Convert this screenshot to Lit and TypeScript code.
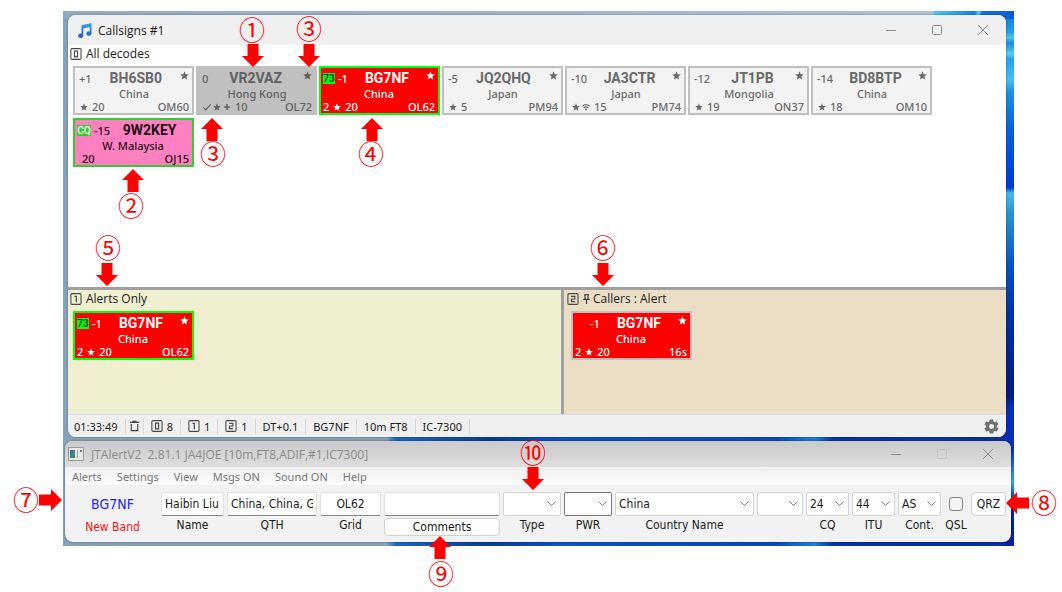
import { LitElement, html, css, svg, nothing } from "lit";
import { customElement, property } from "lit/decorators.js";

type Tone = "plain" | "worked" | "alert" | "wanted" | "caller";

interface Decode {
  tone: Tone;
  badge?: string;
  blankBadge?: boolean;
  snr: string;
  call: string;
  country: string;
  topStar: boolean;
  count?: string;
  marks: string[];
  bearing: string;
  grid: string;
}

const alertDecode: Decode = {
  tone: "alert", badge: "73", snr: "-1", call: "BG7NF", country: "China",
  topStar: true, count: "2", marks: ["star"], bearing: "20", grid: "OL62",
};

const allDecodes: Decode[] = [
  { tone: "plain", snr: "+1", call: "BH6SB0", country: "China", topStar: true, marks: ["star"], bearing: "20", grid: "OM60" },
  { tone: "worked", snr: "0", call: "VR2VAZ", country: "Hong Kong", topStar: true, marks: ["check", "star", "plus"], bearing: "10", grid: "OL72" },
  alertDecode,
  { tone: "plain", snr: "-5", call: "JQ2QHQ", country: "Japan", topStar: true, marks: ["star"], bearing: "5", grid: "PM94" },
  { tone: "plain", snr: "-10", call: "JA3CTR", country: "Japan", topStar: true, marks: ["star", "wifi"], bearing: "15", grid: "PM74" },
  { tone: "plain", snr: "-12", call: "JT1PB", country: "Mongolia", topStar: true, marks: ["star"], bearing: "19", grid: "ON37" },
  { tone: "plain", snr: "-14", call: "BD8BTP", country: "China", topStar: true, marks: ["star"], bearing: "18", grid: "OM10" },
  { tone: "wanted", badge: "CQ", snr: "-15", call: "9W2KEY", country: "W. Malaysia", topStar: false, marks: [], bearing: "20", grid: "OJ15" },
];

const callerDecode: Decode = { ...alertDecode, tone: "caller", badge: undefined, blankBadge: true, grid: "16s" };

const shapes: Record<string, unknown> = {
  star: svg`<path fill="currentColor" d="M5 .4 6.3 3.6 9.8 3.9 7.1 6.1 8 9.5 5 7.7 2 9.5 2.9 6.1 .2 3.9 3.7 3.6Z"/>`,
  check: svg`<path fill="none" stroke="currentColor" stroke-width="1.3" d="M.6 5.6 3.4 8.6 9.6 1.8"/>`,
  plus: svg`<path fill="none" stroke="currentColor" stroke-width="2" d="M5 1.4V8.6M1.4 5H8.6"/>`,
  wifi: svg`<g fill="none" stroke="currentColor" stroke-width="1.3"><path d="M.4 3.8Q5 .2 9.6 3.8M2 6Q5 3.6 8 6"/></g><path fill="currentColor" d="M3.2 7.5Q5 6.3 6.8 7.5L5 9.6Z"/>`,
};

const mark = (name: string) => html`<svg class="mark ${name}" viewBox="0 0 10 10" aria-hidden="true">${shapes[name]}</svg>`;

const digitPaths = [
  "M4.6 3.4H7.9V9.6H4.6Z",
  "M4.6 3.6H6.6V10",
  "M4.2 3.6H8.2V6.5H4.6V9.4H8.4",
];
const boxed = (n: number) => html`<svg class="boxed" viewBox="0 0 12.5 13" role="img" aria-label="Panel ${n}">
  <rect x=".7" y=".7" width="11" height="11.6" rx="1.2" fill="none" stroke="currentColor" stroke-width="1.2"/>
  <path d=${digitPaths[n]} fill="none" stroke="currentColor" stroke-width="1.3"/></svg>`;

const captionButtons = html`
  <button class="cap" aria-label="Minimize"><svg viewBox="0 0 12 12"><path d="M1 6.5H11"/></svg></button>
  <button class="cap max" aria-label="Maximize"><svg viewBox="0 0 12 12"><rect x="1.5" y="1.5" width="9" height="9" rx="1"/></svg></button>
  <button class="cap" aria-label="Close"><svg viewBox="0 0 12 12"><path d="M1 1 11 11M11 1 1 11"/></svg></button>`;

const captionStyles = css`
  .cap {
    width: 46px;
    height: 24px;
    padding: 0;
    border: 0;
    background: none;
    display: grid;
    place-items: center;
  }
  .cap svg {
    width: 12px;
    height: 12px;
    fill: none;
    stroke: #8e8e8e;
    stroke-width: 1;
  }
`;

@customElement("decode-card")
class DecodeCard extends LitElement {
  @property({ attribute: false }) decode!: Decode;

  static styles = css`
    :host { display: block; width: 121px; }
    .card {
      box-sizing: border-box;
      height: 49px;
      border: 2px solid #c0c0c0;
      padding: 1px 3px 0 4px;
      background: #f3f3f3;
      color: #696969;
      font: 500 11px/13px "Noto Sans", sans-serif;
      display: grid;
      grid-template-rows: 18px 13px 13px;
    }
    .worked { background: #c0c0c0; color: #5f5f5f; }
    .alert { background: #f00; color: #fff; border-color: #0f0; }
    .caller { background: #f00; color: #fff; }
    .wanted { background: #ff80c0; color: #1c0c14; border-color: #32cd32; }
    .alert, .wanted, .caller { padding-left: 2px; }
    .row { display: flex; align-items: center; }
    .badge {
      width: 12px;
      height: 11px;
      margin-right: 3px;
      font: 500 10px/11px Roboto, sans-serif;
      text-align: center;
      color: #033;
      background: #0f0;
    }
    .wanted .badge { width: 14px; background: #32cd32; color: #fff; }
    .blank { background: none; }
    .call {
      flex: 1;
      text-align: center;
      font: 700 14px/16px Roboto, sans-serif;
    }
    .country { text-align: center; }
    .foot { display: flex; align-items: center; gap: 4px; }
    .plain .foot, .worked .foot { padding-left: 1px; }
    .wanted .foot { padding-left: 5px; }
    .marks { display: flex; gap: 2px; }
    .grid { margin-left: auto; }
    .mark { width: 8px; height: 8px; display: block; }
    .row > .mark { align-self: flex-start; margin-top: 2px; width: 9px; height: 9px; }
  `;

  render() {
    const d = this.decode;
    return html`<article class="card ${d.tone}">
      <div class="row">
        ${d.badge ? html`<span class="badge">${d.badge}</span>` : d.blankBadge ? html`<span class="badge blank"></span>` : nothing}
        <span>${d.snr}</span><span class="call">${d.call}</span>${d.topStar ? mark("star") : nothing}
      </div>
      <div class="country">${d.country}</div>
      <div class="foot">
        ${d.count ? html`<span>${d.count}</span>` : nothing}
        ${d.marks.length ? html`<span class="marks">${d.marks.map(mark)}</span>` : nothing}
        <span>${d.bearing}</span><span class="grid">${d.grid}</span>
      </div>
    </article>`;
  }
}

@customElement("callsigns-window")
class CallsignsWindow extends LitElement {
  static styles = [captionStyles, css`
    :host {
      display: flex;
      flex-direction: column;
      overflow: hidden;
      border-radius: 8px;
      background: #fff;
      color: #1b1b1b;
      font: 11px/15px "Noto Sans", sans-serif;
    }
    .title {
      height: 30px;
      display: flex;
      align-items: center;
      padding: 0 0 0 9px;
      background: #f0f0f0;
    }
    .title, .heading { font: 12px/15px "Open Sans", sans-serif; }
    .note { width: 16px; height: 15px; margin-right: 5px; }
    .name { flex: 1; }
    .panel { padding: 1px 2px 0; }
    .main { height: 241px; }
    .heading {
      height: 15px;
      display: flex;
      align-items: center;
      gap: 4px;
      margin: 0;
    }
    .boxed { width: 12px; height: 12px; color: #4a4a4a; display: block; }
    .pin { width: 7px; height: 10px; margin-right: -1px; }
    .cards {
      display: flex;
      flex-wrap: wrap;
      gap: 3px 2px;
      padding: 5px 3px 0;
    }
    .lower {
      display: grid;
      grid-template-columns: 493fr 442fr;
      gap: 3px;
      border-top: 3px solid #a0a0a0;
      background: #a0a0a0;
      height: 124px;
    }
    .alerts { background: #f0f0d0; }
    .callers { background: #eadfc5; padding-left: 3px; }
    .callers .cards { padding-left: 4px; }
    .status {
      height: 23px;
      border-top: 1px solid #dcdce4;
      box-sizing: border-box;
      display: flex;
      align-items: center;
      padding: 0 6px;
      background: #f0f0f0;
    }
    .cell {
      display: flex;
      align-items: center;
      gap: 4px;
      height: 15px;
      padding: 0 7px;
      border-right: 1px solid #d8d8d8;
    }
    .cell:first-child { padding-left: 0; }
    .tight { padding: 0 4px; }
    .bin, .gear { padding: 0; border: 0; background: none; display: block; color: #444; }
    .bin svg { width: 9px; height: 12px; display: block; }
    .gear { margin-left: auto; color: #707070; }
    .gear svg { width: 17px; height: 17px; display: block; }
  `];

  render() {
    return html`
      <header class="title">
        <svg class="note" viewBox="0 0 15 15" aria-hidden="true">
          <defs><linearGradient id="n" x1="0" y1="0" x2="0" y2="1"><stop offset="0" stop-color="#35a5f0"/><stop offset="1" stop-color="#2456c8"/></linearGradient></defs>
          <path fill="url(#n)" d="M4 2.2 14 0V10.5A2.6 2.2 0 1 1 12.2 8.5V4L5.8 5.4V12.6A2.6 2.2 0 1 1 4 10.6Z"/>
        </svg>
        <span class="name">Callsigns #1</span>${captionButtons}
      </header>
      <section class="panel main">
        <h2 class="heading">${boxed(0)}All decodes</h2>
        <div class="cards">${allDecodes.map((d) => html`<decode-card .decode=${d}></decode-card>`)}</div>
      </section>
      <div class="lower">
        <section class="panel alerts">
          <h2 class="heading">${boxed(1)}Alerts Only</h2>
          <div class="cards"><decode-card .decode=${alertDecode}></decode-card></div>
        </section>
        <section class="panel callers">
          <h2 class="heading">${boxed(2)}<svg class="pin" viewBox="0 0 7 10" aria-hidden="true"><path d="M1 .8H6M2 .8V5M5 .8V5M.3 5.4H6.7M3.5 5.4V10" fill="none" stroke="#333" stroke-width="1.1"/></svg>Callers : Alert</h2>
          <div class="cards"><decode-card .decode=${callerDecode}></decode-card></div>
        </section>
      </div>
      <footer class="status">
        <span class="cell">01:33:49</span>
        <span class="cell tight"><button class="bin" aria-label="Clear"><svg viewBox="0 0 10 12"><path d="M0 2H10M3.3 2V.7H6.7V2M1.4 3.8V11.2H8.6V3.8" fill="none" stroke="currentColor" stroke-width="1.3"/></svg></button></span>
        <span class="cell">${boxed(0)}8</span>
        <span class="cell">${boxed(1)}1</span>
        <span class="cell">${boxed(2)}1</span>
        <span class="cell">DT+0.1</span>
        <span class="cell">BG7NF</span>
        <span class="cell">10m FT8</span>
        <span class="cell">IC-7300</span>
        <button class="gear" aria-label="Settings"><svg viewBox="0 0 24 24"><path fill="currentColor" d="M19.4 13c0-.3.1-.6.1-1s0-.7-.1-1l2.1-1.6c.2-.2.2-.4.1-.6l-2-3.5c-.1-.2-.4-.3-.6-.2l-2.500 1c-.5-.4-1.100-.7-1.700-1l-.4-2.600c0-.3-.2-.5-.5-.5h-4c-.2 0-.4.2-.5.4l-.4 2.700c-.6.2-1.200.6-1.700 1l-2.500-1c-.2-.1-.5 0-.6.2l-2 3.500c-.1.2-.1.5.1.6L4.500 11c0 .3-.1.6-.1 1s0 .7.1 1l-2.100 1.600c-.2.2-.2.4-.1.6l2 3.500c.1.2.4.3.6.2l2.500-1c.5.4 1.100.7 1.700 1l.4 2.600c0 .3.2.5.5.5h4c.2 0 .5-.2.5-.4l.4-2.700c.6-.2 1.200-.6 1.700-1l2.500 1c.2.1.5 0 .6-.2l2-3.500c.1-.2.1-.5-.1-.6zM12 15.500a3.500 3.500 0 1 1 0-7 3.500 3.500 0 0 1 0 7z"/></svg></button>
      </footer>`;
  }
}

@customElement("jtalert-window")
class JtalertWindow extends LitElement {
  static styles = [captionStyles, css`
    :host {
      display: block;
      overflow: hidden;
      border-radius: 8px;
      background: #f2f2f2;
      font: 12px/14px "DejaVu Sans Condensed", "DejaVu Sans", sans-serif;
      color: #1b1b1b;
    }
    .title {
      display: flex;
      align-items: center;
      height: 26px;
      padding-left: 3px;
      background: linear-gradient(#cacaca, #dedede);
      color: #8a8a8a;
      font: 12px/15px "Open Sans", sans-serif;
    }
    .app { width: 16px; height: 14px; margin-right: 7px; }
    .name { flex: 1; white-space: pre; }
    .max { opacity: 0.25; }
    .menu {
      display: flex;
      gap: 15px;
      height: 18px;
      align-items: center;
      padding: 0 7px;
      background: linear-gradient(#f0f0f0, #fbfbfb);
      font: 11px/15px "Noto Sans", sans-serif;
    }
    .menu button { padding: 0; border: 0; background: none; font: inherit; color: #777; }
    .form {
      display: grid;
      grid-template-columns: 91px 63px 90px 61px 116px 58px 48px minmax(100px, 1fr) 46px 43px 43px 43px 24px 35px;
      grid-template-rows: 24px 18px;
      gap: 2px 3px;
      padding: 7px 5px 6px 2px;
    }
    .call, .band { text-align: center; }
    .call { color: #22f; font-size: 14px; line-height: 24px; }
    .band { color: #f11; line-height: 18px; }
    input.text, select {
      box-sizing: border-box;
      width: 100%;
      min-width: 0;
      height: 24px;
      border: 1px solid #e2e2e2;
      border-bottom-color: #868686;
      border-radius: 2px;
      padding: 0 3px;
      background: #fff;
      color: #1b1b1b;
      font: inherit;
    }
    .mid { text-align: center; }
    select {
      appearance: none;
      border-color: #d4d4d4;
      background: #fff url("data:image/svg+xml,%3Csvg xmlns='http://www.w3.org/2000/svg' width='9' height='6'%3E%3Cpath d='M.5.5 4.5 4.5 8.5.5' fill='none' stroke='%23888'/%3E%3C/svg%3E") right 4px center no-repeat;
    }
    select.dark { border-color: #7a7a7a; }
    label { text-align: center; line-height: 14px; }
    .push {
      border: 1px solid #d0d0d0;
      border-radius: 4px;
      padding: 0;
      background: #fdfdfd;
      color: #1b1b1b;
      font: inherit;
    }
    .tick {
      appearance: none;
      width: 14px;
      height: 14px;
      margin: 0;
      border: 1px solid #868686;
      border-radius: 3px;
      background: #f6f6f6;
      place-self: center;
    }
  `];

  render() {
    return html`
      <header class="title">
        <svg class="app" viewBox="0 0 16 14" aria-hidden="true"><rect x=".5" y=".5" width="15" height="13" fill="#e8e8e8" stroke="#999"/><rect x="2" y="3" width="5" height="8" fill="#3f8a7c"/><path d="M2 3H5V7H2Z" fill="#4a6fa5"/><path d="M9 3H10V11H9Z" fill="#aaa"/><path d="M12 3H14V5H12Z" fill="#777"/></svg>
        <span class="name">JTAlertV2  2.81.1 JA4JOE [10m,FT8,ADIF,#1,IC7300]</span>${captionButtons}
      </header>
      <nav class="menu">
        ${["Alerts", "Settings", "View", "Msgs ON", "Sound ON", "Help"].map((m) => html`<button>${m}</button>`)}
      </nav>
      <form class="form">
        <span class="call">BG7NF</span>
        <input class="text" id="name" value="Haibin Liu">
        <input class="text" id="qth" value="China, China, Guangdong">
        <input class="text mid" id="grid" value="OL62">
        <input class="text" aria-label="Comments">
        <select id="type"><option></option></select>
        <select id="pwr" class="dark"><option></option></select>
        <select id="country"><option>China</option></select>
        <select aria-label="State"><option></option></select>
        <select id="cq"><option>24</option></select>
        <select id="itu"><option>44</option></select>
        <select id="cont"><option>AS</option></select>
        <input class="tick" type="checkbox" id="qsl">
        <button class="push" type="button">QRZ</button>
        <span class="band">New Band</span>
        <label for="name">Name</label>
        <label for="qth">QTH</label>
        <label for="grid">Grid</label>
        <button class="push" type="button">Comments</button>
        <label for="type">Type</label>
        <label for="pwr">PWR</label>
        <label for="country">Country Name</label>
        <span></span>
        <label for="cq">CQ</label>
        <label for="itu">ITU</label>
        <label for="cont">Cont.</label>
        <label for="qsl">QSL</label>
      </form>`;
  }
}

interface Callout { n: string; x: number; y: number; dir: "down" | "up" | "left" | "right"; ax: number; ay: number }

// Centre of the number (x, y) and centre of its arrow (ax, ay) on the annotated canvas.
const callouts: Callout[] = [
  { n: "①", x: 252, y: 29, dir: "down", ax: 253, ay: 55 },
  { n: "③", x: 309, y: 28, dir: "down", ax: 309, ay: 55 },
  { n: "③", x: 213, y: 153, dir: "up", ax: 212, ay: 130 },
  { n: "④", x: 371, y: 153, dir: "up", ax: 372, ay: 130 },
  { n: "②", x: 131, y: 205, dir: "up", ax: 133, ay: 181 },
  { n: "⑤", x: 108, y: 247, dir: "down", ax: 107, ay: 274 },
  { n: "⑥", x: 603, y: 247, dir: "down", ax: 603, ay: 274 },
  { n: "⑩", x: 533, y: 452, dir: "down", ax: 533, ay: 478 },
  { n: "⑨", x: 441, y: 573, dir: "up", ax: 440, ay: 548 },
  { n: "⑦", x: 26, y: 499, dir: "right", ax: 50, ay: 500 },
  { n: "⑧", x: 1044, y: 502, dir: "left", ax: 1018, ay: 503 },
];

@customElement("app-root")
class AppRoot extends LitElement {
  static styles = css`
    :host { display: block; background: #fff; }
    .sheet { position: relative; min-height: 100vh; box-sizing: border-box; padding: 11px 48px 46px 63px; }
    .desktop {
      display: flex;
      flex-direction: column;
      gap: 4px;
      padding: 4px 3px 4px 2px;
      background:
        linear-gradient(100deg, #4fc8f0, #2aa0ea 30%, #1280e0 50%, #4fd0f0 55%, #1272dc 60%, #0a58d8) right 0 top 0 / 80px 8px no-repeat,
        linear-gradient(#1272dc, #2aa0ea 4%, #4fc8e0 5%, #1e88e0 6%, #58d0e8 8%, #2aa0ea 9%, #48c0e8 13%, #2390e0 15%, #0a60dc 22%, #0038d0 33%, #48b8e0 34%, #2c90d0 38%, #0a50c0 48%, #0430a8 56%, #031a80 70%, #031a80 72%, #0a2fb0 74%, #0a2fb0 82%, #38a8e0 88%, #06209a 92%) right 0 top 0 / 10px 100% no-repeat,
        linear-gradient(90deg, #8facc2, #a9c6da) left 0 top 0 / 100% 8px no-repeat,
        linear-gradient(90deg, #86a2b8 0 34%, #1c64c8 35%, #0a3a9a 45%, #0b50c8 52%, #0a48c0 75%, #1f7fe0 79%, #0834a8 81%, #0a2fa0);
    }
    .first { margin: 0 5px 0 3px; box-shadow: 0 0 2px rgba(0, 0, 0, 0.45); }
    .second { box-shadow: 0 0 2px rgba(0, 0, 0, 0.45); }
    .number, .arrow { position: absolute; transform: translate(-50%, -50%); }
    .number { color: #f00; font: 26px/26px "Noto Sans CJK JP", sans-serif; }
    .arrow { width: 22px; height: 24px; fill: #f00; }
    .up { transform: translate(-50%, -50%) rotate(180deg); }
    .left { transform: translate(-50%, -50%) rotate(90deg); }
    .right { transform: translate(-50%, -50%) rotate(-90deg); }
  `;

  render() {
    return html`<main class="sheet">
      <div class="desktop">
        <callsigns-window class="first"></callsigns-window>
        <jtalert-window class="second"></jtalert-window>
      </div>
      ${callouts.map((c) => html`
        <span class="number" style="left:${c.x}px;top:${c.y}px">${c.n}</span>
        <svg class="arrow ${c.dir}" viewBox="0 0 22 24" aria-hidden="true" style="left:${c.ax}px;top:${c.ay}px"><path d="M5.5 1H16.5V13H22L11 24 0 13H5.5Z"/></svg>`)}
    </main>`;
  }
}
